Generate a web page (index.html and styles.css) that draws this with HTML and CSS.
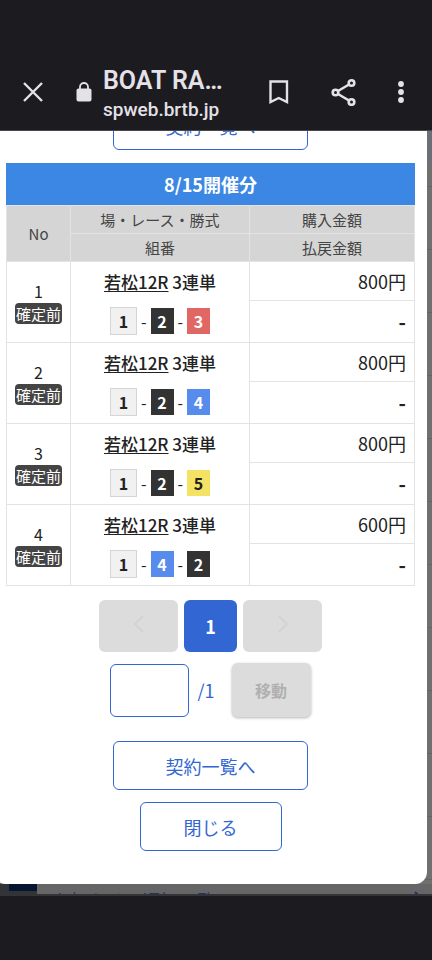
FILE: index.html
```
<!DOCTYPE html>
<html lang="ja">
  <head>
    <meta charset="UTF-8" />
    <meta name="viewport" content="width=device-width, initial-scale=1.0" />
    <title>BOAT RACE</title>
    <link rel="stylesheet" href="styles.css" />
  </head>
  <body>
    <header class="toolbar">
      <button class="icon-btn" aria-label="閉じる">
        <svg width="24" height="24" viewBox="0 0 24 24" fill="none" stroke="currentColor" stroke-width="2.400">
          <path d="M3 3l18 18M21 3L3 21" />
        </svg>
      </button>
      <svg class="lock" width="16" height="20" viewBox="0 0 16 20">
        <rect x="0.500" y="6.500" width="15" height="13" rx="2" fill="currentColor" />
        <path d="M4 8V5a4 4 0 0 1 8 0v3" fill="none" stroke="currentColor" stroke-width="1.800" />
      </svg>
      <div class="site">
        <div class="site-title">BOAT RA…</div>
        <div class="site-url">spweb.brtb.jp</div>
      </div>
      <button class="icon-btn bookmark" aria-label="ブックマーク">
        <svg width="20" height="26" viewBox="0 0 20 26" fill="none" stroke="currentColor" stroke-width="2.400">
          <path d="M1.500 2.500h16.500v20.500l-8.250-4-8.250 4z" />
        </svg>
      </button>
      <button class="icon-btn share" aria-label="共有">
        <svg width="26" height="28" viewBox="0 0 26 28" fill="none" stroke="currentColor" stroke-width="2.600">
          <circle cx="4.500" cy="14.500" r="2.800" />
          <circle cx="20.500" cy="5" r="2.800" />
          <circle cx="20.500" cy="24" r="2.800" />
          <path d="M7 13l11-6.500M7 16l11 6.500" />
        </svg>
      </button>
      <button class="icon-btn menu" aria-label="メニュー">
        <svg width="6" height="24" viewBox="0 0 6 24" fill="currentColor">
          <circle cx="3" cy="4" r="2.900" />
          <circle cx="3" cy="12" r="2.900" />
          <circle cx="3" cy="20" r="2.900" />
        </svg>
      </button>
    </header>

    <main class="page">
      <div class="modal">
        <button class="btn btn-wide btn-top">契約一覧へ</button>

        <table class="bets">
          <caption>8/15開催分</caption>
          <colgroup>
            <col class="col-no" />
            <col class="col-race" />
            <col class="col-amount" />
          </colgroup>
          <thead>
            <tr>
              <th rowspan="2">No</th>
              <th>場・レース・勝式</th>
              <th>購入金額</th>
            </tr>
            <tr>
              <th>組番</th>
              <th>払戻金額</th>
            </tr>
          </thead>
          <tbody>
            <tr class="row-buy">
              <td class="no" rowspan="2">1<span class="status">確定前</span></td>
              <td class="race" rowspan="2">
                <div class="race-name"><a href="#">若松12R</a> 3連単</div>
                <div class="combo"><span class="boat boat1">1</span>-<span class="boat boat2">2</span>-<span class="boat boat3">3</span></div>
              </td>
              <td class="amount">800円</td>
            </tr>
            <tr class="row-pay"><td class="amount payout">-</td></tr>
            <tr class="row-buy">
              <td class="no" rowspan="2">2<span class="status">確定前</span></td>
              <td class="race" rowspan="2">
                <div class="race-name"><a href="#">若松12R</a> 3連単</div>
                <div class="combo"><span class="boat boat1">1</span>-<span class="boat boat2">2</span>-<span class="boat boat4">4</span></div>
              </td>
              <td class="amount">800円</td>
            </tr>
            <tr class="row-pay"><td class="amount payout">-</td></tr>
            <tr class="row-buy">
              <td class="no" rowspan="2">3<span class="status">確定前</span></td>
              <td class="race" rowspan="2">
                <div class="race-name"><a href="#">若松12R</a> 3連単</div>
                <div class="combo"><span class="boat boat1">1</span>-<span class="boat boat2">2</span>-<span class="boat boat5">5</span></div>
              </td>
              <td class="amount">800円</td>
            </tr>
            <tr class="row-pay"><td class="amount payout">-</td></tr>
            <tr class="row-buy">
              <td class="no" rowspan="2">4<span class="status">確定前</span></td>
              <td class="race" rowspan="2">
                <div class="race-name"><a href="#">若松12R</a> 3連単</div>
                <div class="combo"><span class="boat boat1">1</span>-<span class="boat boat4">4</span>-<span class="boat boat2">2</span></div>
              </td>
              <td class="amount">600円</td>
            </tr>
            <tr class="row-pay"><td class="amount payout">-</td></tr>
          </tbody>
        </table>

        <nav class="pager">
          <button class="page-btn" disabled aria-label="前へ">
            <svg width="10" height="18" viewBox="0 0 10 18" fill="none" stroke="currentColor" stroke-width="1.500"><path d="M9 1L1 9l8 8" /></svg>
          </button>
          <button class="page-btn current">1</button>
          <button class="page-btn" disabled aria-label="次へ">
            <svg width="10" height="18" viewBox="0 0 10 18" fill="none" stroke="currentColor" stroke-width="1.500"><path d="M1 1l8 8-8 8" /></svg>
          </button>
        </nav>

        <form class="jump">
          <input type="text" id="pageNo" class="jump-input" />
          <label for="pageNo" class="jump-total">/1</label>
          <button type="button" class="jump-btn" disabled>移動</button>
        </form>

        <div class="actions">
          <button class="btn btn-wide">契約一覧へ</button>
          <button class="btn btn-close">閉じる</button>
        </div>
      </div>

      <!-- page behind the dialog -->
      <div class="behind">
        <div class="behind-icon"></div>
        <a href="#" class="behind-link">お知らせ・通知一覧
          <svg width="10" height="18" viewBox="0 0 10 18" fill="none" stroke="currentColor" stroke-width="2"><path d="M1 1l8 8-8 8" /></svg>
        </a>
      </div>
    </main>

    <footer class="system-nav"></footer>
  </body>
</html>
```
FILE: styles.css
```
* {
  box-sizing: border-box;
}
body {
  display: flex;
  flex-direction: column;
  height: 100vh;
  margin: 0;
  background-color: #1c1b20;
  color: #222;
  font-family: "Noto Sans CJK JP", sans-serif;
}
button,
input {
  font-family: inherit;
}

/* browser bar */
.toolbar {
  display: flex;
  flex: none;
  align-items: center;
  height: 130px;
  padding: 54px 28px 0 21px;
  color: #e4e1e8;
  font-family: Roboto, sans-serif;
}
.icon-btn {
  display: flex;
  padding: 0;
  border: none;
  background: none;
  color: inherit;
}
.lock {
  margin-left: 31px;
}
.site {
  flex: 1;
  min-width: 0;
  margin-left: 11px;
  padding-top: 4px;
  font-weight: 600;
  white-space: nowrap;
}
.site-title {
  font-size: 25px;
  line-height: 32px;
}
.site-url {
  font-size: 19px;
  font-weight: 500;
  line-height: 26px;
}
.share {
  margin-left: 42px;
}
.menu {
  margin-left: 41px;
}
/* strip under the gesture bar */
.system-nav {
  flex: none;
  height: 64px;
}

.page {
  flex: 1;
  min-height: 0;
  overflow: hidden;
  border-top: 1px solid #48474c;
  border-bottom: 2px solid #343338;
  background:
    linear-gradient(#6b6f78, #6b6f78) 0 0 / 100% 32px no-repeat,
    repeating-linear-gradient(#70716e 0 62px, #636461 62px 63px) 0 -7px;
}
.modal {
  margin: 0 5px 0 -6px;
  padding: 0 12px 33px;
  border-radius: 0 0 12px 12px;
  background-color: #fff;
}

.btn {
  display: block;
  height: 49px;
  margin: 0 auto;
  padding: 0;
  border: 1px solid #3266d2;
  border-radius: 6px;
  background-color: #fff;
  color: #3266d2;
  font-size: 18px;
}
.btn-wide {
  width: 195px;
}
/* scrolled partly under the browser bar */
.btn-top {
  position: relative;
  top: -30px;
  margin-bottom: -17px;
}
.btn-close {
  width: 142px;
}

.bets {
  width: 100%;
  border-collapse: collapse;
  table-layout: fixed;
}
.bets caption {
  background-color: #3b87e3;
  color: #fff;
  font-size: 18px;
  font-weight: 700;
  line-height: 42px;
}
.col-no {
  width: 64px;
}
.col-race {
  width: 179px;
}
.bets th,
.bets td {
  padding: 0;
  border: 1px solid #e3e3e3;
}
.bets th {
  height: 28px;
  background-color: #d5d5d5;
  color: #444;
  font-size: 15px;
  font-weight: 400;
  line-height: 20px;
}
.row-buy {
  height: 39px;
}
.row-pay {
  height: 42px;
}
.no {
  font-size: 16px;
  line-height: 20px;
  text-align: center;
}
.status {
  display: block;
  width: 47px;
  margin: 2px auto 0;
  border-radius: 4px;
  background-color: #444;
  color: #fff;
  font-size: 15px;
  line-height: 21px;
}
.race {
  text-align: center;
}
.race-name {
  font-size: 17px;
  font-weight: 500;
  line-height: 24px;
}
.race-name a {
  color: inherit;
  text-underline-offset: 2px;
}
.combo {
  display: flex;
  justify-content: center;
  align-items: center;
  gap: 4px;
  margin-top: 13px;
  font-size: 16px;
  line-height: 24px;
}
.boat {
  width: 23px;
  height: 26px;
  font-weight: 700;
  line-height: 26px;
  color: #fff;
}
.boat1 {
  width: 27px;
  height: 28px;
  border: 1px solid #d5d5d5;
  background-color: #f1f1f1;
  color: #222;
}
.boat2 {
  background-color: #333;
}
.boat3 {
  background-color: #e16765;
}
.boat4 {
  background-color: #588cec;
}
.boat5 {
  background-color: #f4e264;
  color: #222;
}
.bets .amount {
  padding-right: 8px;
  font-size: 18px;
  line-height: 24px;
  text-align: right;
}
.bets .payout {
  font-size: 20px;
  font-weight: 700;
}

.pager {
  display: flex;
  justify-content: center;
  gap: 6px;
  margin-top: 14px;
}
.page-btn {
  width: 79px;
  height: 52px;
  padding: 0;
  border: none;
  border-radius: 6px;
  background-color: #dcdcdc;
  color: #d0d0d0;
}
.current {
  width: 53px;
  background-color: #3266d2;
  color: #fff;
  font-size: 18px;
  font-weight: 700;
}

.jump {
  display: flex;
  justify-content: center;
  align-items: center;
  margin-top: 11px;
}
.jump-input {
  width: 79px;
  height: 53px;
  border: 1px solid #3266d2;
  border-radius: 6px;
  background-color: #fff;
}
.jump-total {
  margin: 0 17px 0 8px;
  color: #3266d2;
  font-size: 18px;
}
.jump-btn {
  width: 79px;
  height: 54px;
  padding: 0;
  border: none;
  border-radius: 6px;
  background-color: #dcdcdc;
  box-shadow: 0 1px 3px rgba(0, 0, 0, 0.3);
  color: #b0b0b0;
  font-size: 16px;
  font-weight: 700;
}

.actions {
  display: grid;
  gap: 12px;
  margin-top: 24px;
}

.behind {
  display: flex;
  height: 40px;
  background-color: #666;
}
.behind-icon {
  width: 37px;
  border-left: 9px solid #303338;
  background: linear-gradient(#061530 0 7px, #303338 7px);
}
.behind-link {
  display: flex;
  flex: 1;
  justify-content: space-between;
  padding: 3px 8px 0 16px;
  color: #1d3468;
  font-size: 18px;
  text-decoration: none;
}
.behind-link svg {
  margin-top: 4px;
}
```
